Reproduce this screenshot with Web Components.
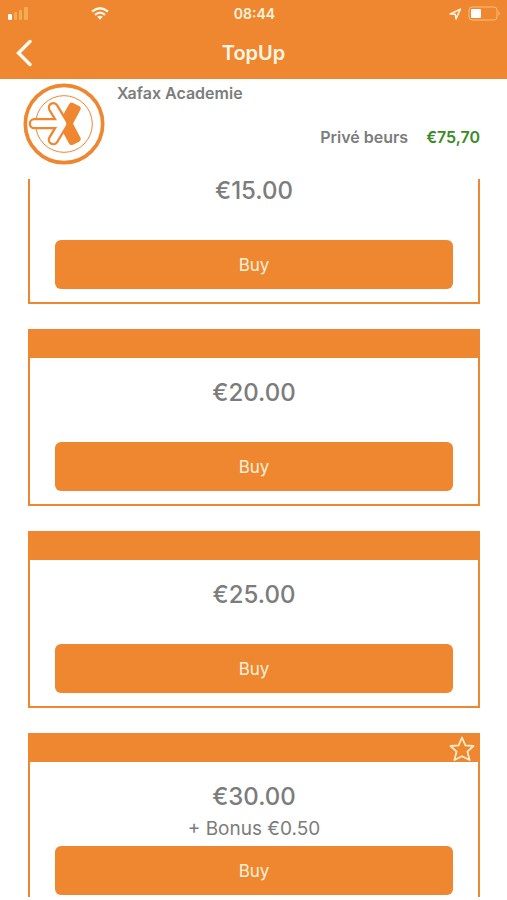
<!DOCTYPE html>
<html lang="nl">
<head>
<meta charset="utf-8">
<meta name="viewport" content="width=device-width, initial-scale=1">
<title>TopUp</title>
<style>
  :root { --brand: #ee8730; --grey: #7c7c7c; --green: #3c8a24; }
  body { margin: 0; background: #fff; color: var(--grey); font-family: Inter, "Liberation Sans", sans-serif; }
</style>
</head>
<body>
<topup-app></topup-app>
<script>
  const define = (name, html) => {
    const template = document.createElement('template');
    template.innerHTML = html;
    customElements.define(name, class extends HTMLElement {
      constructor() {
        super();
        this.attachShadow({ mode: 'open' }).append(template.content.cloneNode(true));
      }
    });
  };

  define('status-bar', `
    <style>
      :host { display: grid; grid-template-columns: 1fr auto 1fr; align-items: center; height: 27px; padding: 0 6px 0 8px; color: #fff3dc; font-size: 14px; font-weight: 600; }
      .side { display: flex; align-items: center; }
      .left { gap: 63px; }
      .right { justify-content: flex-end; gap: 6px; }
      svg { display: block; }
    </style>
    <div class="side left">
      <svg width="20" height="13" viewBox="0 0 20 13" aria-label="Signaal"><rect y="7" width="4" height="6" rx="1" fill="#fff"/><g fill="#f4ab55"><rect x="6" y="5" width="3" height="8" rx="1"/><rect x="11" y="3" width="3" height="10" rx="1"/><rect x="16" width="4" height="13" rx="1"/></g></svg>
      <svg width="18" height="13" viewBox="0 0 18 13" aria-label="Wifi"><g fill="none" stroke="#fff8ea" stroke-width="2.3"><path d="M1 4.6Q9-2 17 4.6"/><path d="M4 7.8Q9 3.4 14 7.8"/></g><path d="M6.2 9.8Q9 7.6 11.8 9.8L9 12.8Z" fill="#fff8ea"/></svg>
    </div>
    <time>08:44</time>
    <div class="side right">
      <svg width="13" height="12" viewBox="0 0 13 12" aria-label="Locatie"><path d="M1.2 6L11.4 1.2L7 10.8L6.2 6.2Z" fill="none" stroke="#fff3dc" stroke-width="1.6" stroke-linejoin="round"/></svg>
      <svg width="33" height="15" viewBox="0 0 33 15" aria-label="Batterij"><rect x="1" y="1" width="28" height="13" rx="3" fill="none" stroke="#f8bd7c"/><rect x="3" y="3" width="10" height="9" rx="1" fill="#fff"/><path d="M30.5 5Q33 7.5 30.5 10Z" fill="#f8bd7c"/></svg>
    </div>`);

  define('nav-bar', `
    <style>
      :host { display: grid; grid-template-columns: 1fr auto 1fr; align-items: center; height: 52px; padding: 0 12px; color: #fff6e6; }
      button { justify-self: start; display: flex; padding: 0 4px; border: 0; background: none; cursor: pointer; }
      h1 { margin: 0; font-size: 20px; line-height: 24px; font-weight: 600; }
    </style>
    <button type="button" aria-label="Terug"><svg width="16" height="28" viewBox="0 0 16 28"><path d="M14 2.5L2.5 14L14 25.5" fill="none" stroke="#fffaf0" stroke-width="3.4" stroke-linecap="round"/></svg></button>
    <h1><slot></slot></h1>`);

  define('brand-logo', `
    <style>:host, svg { display: block; }</style>
    <svg width="82" height="82" viewBox="41 22 246 246" role="img" aria-label="Xafax">
      <g fill="none" stroke="#ee8730">
        <circle cx="164" cy="145" r="116" stroke-width="11"/>
        <circle cx="164" cy="145" r="85" stroke-width="3"/>
      </g>
      <g fill="none" stroke-linecap="round" stroke-linejoin="round">
        <path d="M187 90L205 99L181 144L205 190L187 199L160 150V138Z" fill="#ee8730" stroke="#ee8730" stroke-width="18"/>
        <path d="M75 144H160M132 96L161 144L132 192" stroke="#ee8730" stroke-width="34"/>
        <path d="M75 144H160M132 96L161 144L132 192" stroke="#fff" stroke-width="20"/>
      </g>
    </svg>`);

  define('account-header', `
    <style>
      :host { display: flex; gap: 12px; height: 100px; box-sizing: border-box; padding: 4px 27px 0 23px; font-size: 16px; line-height: 20px; font-weight: 600; }
      .info { flex: 1; }
      p { margin: 0; }
      .balance { display: flex; justify-content: flex-end; gap: 18px; margin-top: 24px; }
      .amount { color: var(--green); }
    </style>
    <brand-logo></brand-logo>
    <div class="info">
      <p><slot name="name"></slot></p>
      <p class="balance"><slot name="purse"></slot><span class="amount"><slot name="amount"></slot></span></p>
    </div>`);

  define('topup-card', `
    <style>
      :host { display: flex; flex-direction: column; flex: none; box-sizing: border-box; height: 177px; border: 2px solid var(--brand); text-align: center; }
      header { display: flex; justify-content: flex-end; align-items: center; height: 27px; padding-right: 3px; background: var(--brand); }
      header svg { display: none; }
      :host([favourite]) header svg { display: block; }
      .body { flex: 1; display: flex; flex-direction: column; padding: 23px 25px 13px; }
      h2 { margin: 0; font-size: 24px; line-height: 24px; font-weight: 500; }
      .bonus { margin-top: 8px; font-size: 19px; line-height: 24px; }
      button { margin-top: auto; height: 49px; flex: none; border: 0; border-radius: 6px; background: var(--brand); color: #fff0d8; font: 400 17px/24px Inter, "Liberation Sans", sans-serif; cursor: pointer; }
    </style>
    <header><svg width="26" height="26" viewBox="0 0 26 26" aria-label="Favoriet"><path d="M13 1.5L16.4 9.3L24.5 10L18.4 15.6L20.6 24L13 20.2L5.4 24L7.6 15.6L1.5 10L9.6 9.3Z" fill="none" stroke="#ffecc8" stroke-width="1.8" stroke-linejoin="round"/></svg></header>
    <div class="body">
      <h2><slot></slot></h2>
      <div class="bonus"><slot name="bonus"></slot></div>
      <button type="button">Buy</button>
    </div>`);

  define('topup-list', `
    <style>
      :host { display: flex; flex-direction: column; gap: 25px; flex: 1; min-height: 0; margin-bottom: 3px; padding: 0 27px 0 28px; overflow-y: auto; scrollbar-width: none; }
    </style>
    <slot></slot>`);

  define('topup-app', `
    <style>
      :host { display: flex; flex-direction: column; height: 100vh; }
      .top { background: var(--brand); }
    </style>
    <div class="top"><status-bar></status-bar><nav-bar>TopUp</nav-bar></div>
    <account-header><span slot="name">Xafax Academie</span><span slot="purse">Privé beurs</span><span slot="amount">€75,70</span></account-header>
    <topup-list>
      <topup-card>€15.00</topup-card>
      <topup-card>€20.00</topup-card>
      <topup-card>€25.00</topup-card>
      <topup-card favourite>€30.00<span slot="bonus">+ Bonus €0.50</span></topup-card>
    </topup-list>`);

  // The list opens scrolled past the first card's header.
  document.querySelector('topup-app').shadowRoot.querySelector('topup-list').scrollTop = 52;
</script>
</body>
</html>
